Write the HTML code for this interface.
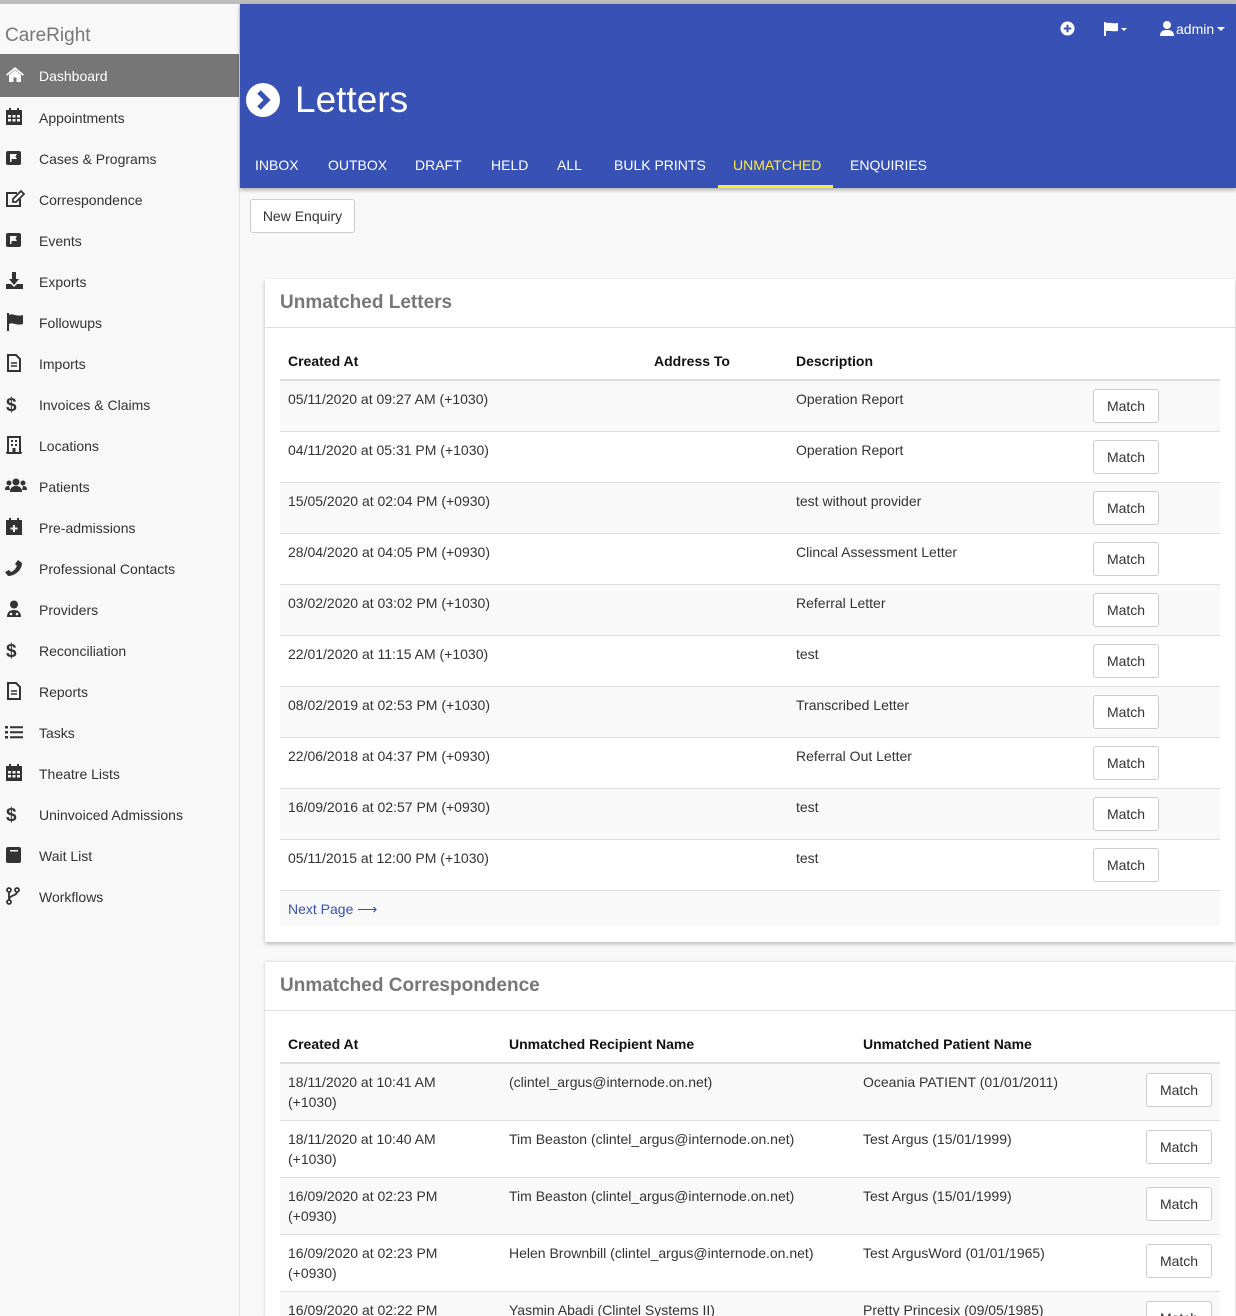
<!DOCTYPE html>
<html style="overflow:hidden;height:1316px"><head><meta charset="utf-8"><style>
*{box-sizing:border-box;margin:0;padding:0}
body{width:1236px;height:1316px;overflow:hidden;background:#f8f8f8;font-family:"Liberation Sans",sans-serif;font-size:14px;color:#333;position:relative}
.a{position:absolute;white-space:nowrap}
#top{position:absolute;left:0;top:0;width:1236px;height:4px;background:#bdbdbd}
#side{position:absolute;left:0;top:4px;width:240px;height:1312px;background:#f8f8f8;border-right:1px solid #e3e3e3}
.brand{position:absolute;left:5px;top:21px;font-size:19px;color:#777}
.nav{position:absolute;left:0;width:239px;height:41px;font-size:14px;color:#333}
.nav .t{position:absolute;left:39px;top:13px}
.nav svg{position:absolute;left:5px;top:11px}
.nav.act{background:#767676;color:#fff;height:43px}
#hdr{position:absolute;left:240px;top:4px;width:996px;height:184px;background:#3751b5;box-shadow:0 2px 4px rgba(0,0,0,.3)}
.tab{position:absolute;top:153px;color:#fff;font-size:14px}
.btn{position:absolute;background:#fff;border:1px solid #ccc;border-radius:3px;font-size:14px;color:#333;text-align:center}
.card{position:absolute;background:#fff;box-shadow:0 2px 4px rgba(0,0,0,.25);overflow:hidden}
.ct{position:absolute;left:15px;font-size:19px;font-weight:bold;color:#777}
.th{position:absolute;font-weight:bold;color:#111}
.row{position:absolute;left:15px;width:940px;border-top:1px solid #ddd}
.row.s{background:#f9f9f9}
.row .c{position:absolute;top:10px}
</style></head><body>
<div id="top"></div>
<div id="side">
<div class="brand">CareRight</div>
<div class="nav act" style="top:50px"><svg width="20" height="18" viewBox="0 0 20 18"><path d="M10 2 1 9.5l1.2 1.2L10 4.5l7.8 6.2L19 9.5z M4 10v7h4.5v-4.5h3V17H16v-7l-6-5z" fill="#fff"/></svg><span class="t" style="top:14px">Dashboard</span></div>
<div class="nav" style="top:93px"><svg width="18" height="18" viewBox="0 0 18 18"><path d="M4 0h2v3H4zM12 0h2v3h-2zM1 2h16v15H1z" fill="#333"/><path d="M3 7h3v2.5H3zM7.5 7h3v2.5h-3zM12 7h3v2.5h-3zM3 11h3v2.5H3zM7.5 11h3v2.5h-3zM12 11h3v2.5h-3z" fill="#f8f8f8"/></svg><span class="t">Appointments</span></div>
<div class="nav" style="top:134px"><svg width="18" height="18" viewBox="0 0 18 18"><rect x="1" y="2" width="15" height="14" rx="2" fill="#333"/><path d="M5 5h7l-1.5 2.5L12 10H6.5v3H5z" fill="#f8f8f8"/></svg><span class="t">Cases &amp; Programs</span></div>
<div class="nav" style="top:175px"><svg width="20" height="18" viewBox="0 0 20 18"><path d="M12 3H2v13h13V9" fill="none" stroke="#333" stroke-width="2"/><path d="M16 1l3 3-8 8H8V9z" fill="none" stroke="#333" stroke-width="1.8"/></svg><span class="t">Correspondence</span></div>
<div class="nav" style="top:216px"><svg width="18" height="18" viewBox="0 0 18 18"><rect x="1" y="2" width="15" height="14" rx="2" fill="#333"/><path d="M5 5h7l-1.5 2.5L12 10H6.5v3H5z" fill="#f8f8f8"/></svg><span class="t">Events</span></div>
<div class="nav" style="top:257px"><svg width="20" height="18" viewBox="0 0 20 18"><path d="M7 0h4v7h3l-5 6-5-6h3zM1 12h5l3 3 3-3h6v5H1z" fill="#333"/></svg><span class="t">Exports</span></div>
<div class="nav" style="top:298px"><svg width="20" height="18" viewBox="0 0 20 18"><path d="M2 0h2v18H2zM4 2c4-2 7 2 14 0v9c-7 2-10-2-14 0z" fill="#333"/></svg><span class="t">Followups</span></div>
<div class="nav" style="top:339px"><svg width="18" height="18" viewBox="0 0 18 18"><path d="M3 1h8l4 4v12H3z" fill="none" stroke="#333" stroke-width="2"/><path d="M6 9h6M6 12h6" stroke="#333" stroke-width="1.5"/></svg><span class="t">Imports</span></div>
<div class="nav" style="top:380px"><svg width="18" height="18" viewBox="0 0 18 18"><text x="1" y="16" font-family="Liberation Sans" font-weight="bold" font-size="19" fill="#333">$</text></svg><span class="t">Invoices &amp; Claims</span></div>
<div class="nav" style="top:421px"><svg width="18" height="18" viewBox="0 0 18 18"><path d="M3 1h12v16H3z" fill="none" stroke="#333" stroke-width="2"/><path d="M6 4h2v2H6zM10 4h2v2h-2zM6 8h2v2H6zM10 8h2v2h-2zM7.5 12h3v5h-3zM1 16h16v1.5H1z" fill="#333"/></svg><span class="t">Locations</span></div>
<div class="nav" style="top:462px"><svg width="22" height="18" viewBox="0 0 22 18"><circle cx="11" cy="5" r="3.5" fill="#333"/><circle cx="4" cy="6" r="2.5" fill="#333"/><circle cx="18" cy="6" r="2.5" fill="#333"/><path d="M5 15c0-4 2-6 6-6s6 2 6 6zM0 13c0-3 1-4 4-4l1 4zM22 13c0-3-1-4-4-4l-1 4z" fill="#333"/></svg><span class="t">Patients</span></div>
<div class="nav" style="top:503px"><svg width="18" height="18" viewBox="0 0 18 18"><path d="M4 0h2v3H4zM12 0h2v3h-2zM1 2h16v15H1z" fill="#333"/><path d="M8 7h2v2.5h2.5v2H10V14H8v-2.5H5.5v-2H8z" fill="#f8f8f8"/></svg><span class="t">Pre-admissions</span></div>
<div class="nav" style="top:544px"><svg width="18" height="18" viewBox="0 0 18 18"><path d="M13 1l4 3c0 7-7 13-14 13L0 13l4-2 2 2c3-1 5-4 6-6l-2-2z" fill="#333"/></svg><span class="t">Professional Contacts</span></div>
<div class="nav" style="top:585px"><svg width="18" height="18" viewBox="0 0 18 18"><circle cx="9" cy="4.5" r="4" fill="#333"/><path d="M2 17c0-5 3-7 7-7s7 2 7 7z" fill="#333"/><circle cx="6" cy="14" r="1.3" fill="#f8f8f8"/><circle cx="12" cy="14" r="1.3" fill="#f8f8f8"/></svg><span class="t">Providers</span></div>
<div class="nav" style="top:626px"><svg width="18" height="18" viewBox="0 0 18 18"><text x="1" y="16" font-family="Liberation Sans" font-weight="bold" font-size="19" fill="#333">$</text></svg><span class="t">Reconciliation</span></div>
<div class="nav" style="top:667px"><svg width="18" height="18" viewBox="0 0 18 18"><path d="M3 1h8l4 4v12H3z" fill="none" stroke="#333" stroke-width="2"/><path d="M6 9h6M6 12h6" stroke="#333" stroke-width="1.5"/></svg><span class="t">Reports</span></div>
<div class="nav" style="top:708px"><svg width="20" height="18" viewBox="0 0 20 18"><path d="M0 3h3v2.5H0zM0 8h3v2.5H0zM0 13h3v2.5H0zM5 3.3h13v2H5zM5 8.3h13v2H5zM5 13.3h13v2H5z" fill="#333"/></svg><span class="t">Tasks</span></div>
<div class="nav" style="top:749px"><svg width="18" height="18" viewBox="0 0 18 18"><path d="M4 0h2v3H4zM12 0h2v3h-2zM1 2h16v15H1z" fill="#333"/><path d="M3 7h3v2.5H3zM7.5 7h3v2.5h-3zM12 7h3v2.5h-3zM3 11h3v2.5H3zM7.5 11h3v2.5h-3zM12 11h3v2.5h-3z" fill="#f8f8f8"/></svg><span class="t">Theatre Lists</span></div>
<div class="nav" style="top:790px"><svg width="18" height="18" viewBox="0 0 18 18"><text x="1" y="16" font-family="Liberation Sans" font-weight="bold" font-size="19" fill="#333">$</text></svg><span class="t">Uninvoiced Admissions</span></div>
<div class="nav" style="top:831px"><svg width="18" height="18" viewBox="0 0 18 18"><rect x="1" y="1" width="15" height="16" rx="2" fill="#333"/><path d="M5 4h8v1.5H5z" fill="#f8f8f8"/></svg><span class="t">Wait List</span></div>
<div class="nav" style="top:872px"><svg width="18" height="18" viewBox="0 0 18 18"><circle cx="4" cy="3" r="2" fill="none" stroke="#333" stroke-width="1.8"/><circle cx="4" cy="15" r="2" fill="none" stroke="#333" stroke-width="1.8"/><circle cx="12" cy="3" r="2" fill="none" stroke="#333" stroke-width="1.8"/><path d="M4 5v8M12 5c0 4-8 3-8 8" fill="none" stroke="#333" stroke-width="1.8"/></svg><span class="t">Workflows</span></div>
</div>

<div id="hdr">
<svg class="a" style="left:5px;top:78px" width="36" height="36" viewBox="0 0 36 36"><circle cx="18" cy="18" r="17" fill="#fff"/><path d="M14 10l8 8-8 8" fill="none" stroke="#3751b5" stroke-width="5"/></svg>
<div class="a" style="left:55px;top:75px;font-size:37px;color:#fff">Letters</div>
<svg class="a" style="left:820px;top:17px" width="15" height="15" viewBox="0 0 16 16"><circle cx="8" cy="8" r="7.5" fill="#fff"/><path d="M4 8h8M8 4v8" stroke="#3751b5" stroke-width="2.2"/></svg>
<svg class="a" style="left:864px;top:18px" width="26" height="14" viewBox="0 0 26 14"><path d="M0 0h2v14H0zM2 1c4-1 6 1 12 0v8c-6 1-8-1-12 0z" fill="#fff"/><path d="M17 6h6l-3 3z" fill="#fff"/></svg>
<svg class="a" style="left:920px;top:17px" width="16" height="15" viewBox="0 0 16 15"><circle cx="7" cy="4" r="4" fill="#fff"/><path d="M0 15c0-5 3-6 7-6s7 1 7 6z" fill="#fff"/></svg>
<div class="a" style="left:936px;top:17px;color:#fff;font-size:14px">admin</div>
<svg class="a" style="left:977px;top:23px" width="9" height="6"><path d="M0 0h8l-4 4z" fill="#fff"/></svg>
<div class="tab" style="left:15px">INBOX</div>
<div class="tab" style="left:88px">OUTBOX</div>
<div class="tab" style="left:175px">DRAFT</div>
<div class="tab" style="left:251px">HELD</div>
<div class="tab" style="left:317px">ALL</div>
<div class="tab" style="left:374px">BULK PRINTS</div>
<div class="tab" style="left:493px;color:#ffeb3b">UNMATCHED</div>
<div class="a" style="left:478px;top:181px;width:115px;height:3px;background:#ffeb3b"></div>
<div class="tab" style="left:610px">ENQUIRIES</div>
</div>

<div class="btn" style="left:250px;top:199px;width:105px;height:34px;line-height:32px">New Enquiry</div>

<div class="card" style="left:265px;top:279px;width:970px;height:663px">
<div class="ct" style="top:13px">Unmatched Letters</div>
<div class="a" style="left:0;top:48px;width:970px;height:1px;background:#ddd"></div>
<div class="th" style="left:23px;top:74px">Created At</div>
<div class="th" style="left:389px;top:74px">Address To</div>
<div class="th" style="left:531px;top:74px">Description</div>
<div class="a" style="left:15px;top:100px;width:940px;height:2px;background:#ddd"></div>
<div class="row s" style="top:102px;height:51px;border-top:0"><span class="c" style="left:8px">05/11/2020 at 09:27 AM (+1030)</span><span class="c" style="left:516px">Operation Report</span><div class="btn" style="left:813px;top:8px;width:66px;height:34px;line-height:32px">Match</div></div>
<div class="row" style="top:152px;height:51px"><span class="c" style="left:8px">04/11/2020 at 05:31 PM (+1030)</span><span class="c" style="left:516px">Operation Report</span><div class="btn" style="left:813px;top:8px;width:66px;height:34px;line-height:32px">Match</div></div>
<div class="row s" style="top:203px;height:51px"><span class="c" style="left:8px">15/05/2020 at 02:04 PM (+0930)</span><span class="c" style="left:516px">test without provider</span><div class="btn" style="left:813px;top:8px;width:66px;height:34px;line-height:32px">Match</div></div>
<div class="row" style="top:254px;height:51px"><span class="c" style="left:8px">28/04/2020 at 04:05 PM (+0930)</span><span class="c" style="left:516px">Clincal Assessment Letter</span><div class="btn" style="left:813px;top:8px;width:66px;height:34px;line-height:32px">Match</div></div>
<div class="row s" style="top:305px;height:51px"><span class="c" style="left:8px">03/02/2020 at 03:02 PM (+1030)</span><span class="c" style="left:516px">Referral Letter</span><div class="btn" style="left:813px;top:8px;width:66px;height:34px;line-height:32px">Match</div></div>
<div class="row" style="top:356px;height:51px"><span class="c" style="left:8px">22/01/2020 at 11:15 AM (+1030)</span><span class="c" style="left:516px">test</span><div class="btn" style="left:813px;top:8px;width:66px;height:34px;line-height:32px">Match</div></div>
<div class="row s" style="top:407px;height:51px"><span class="c" style="left:8px">08/02/2019 at 02:53 PM (+1030)</span><span class="c" style="left:516px">Transcribed Letter</span><div class="btn" style="left:813px;top:8px;width:66px;height:34px;line-height:32px">Match</div></div>
<div class="row" style="top:458px;height:51px"><span class="c" style="left:8px">22/06/2018 at 04:37 PM (+0930)</span><span class="c" style="left:516px">Referral Out Letter</span><div class="btn" style="left:813px;top:8px;width:66px;height:34px;line-height:32px">Match</div></div>
<div class="row s" style="top:509px;height:51px"><span class="c" style="left:8px">16/09/2016 at 02:57 PM (+0930)</span><span class="c" style="left:516px">test</span><div class="btn" style="left:813px;top:8px;width:66px;height:34px;line-height:32px">Match</div></div>
<div class="row" style="top:560px;height:51px"><span class="c" style="left:8px">05/11/2015 at 12:00 PM (+1030)</span><span class="c" style="left:516px">test</span><div class="btn" style="left:813px;top:8px;width:66px;height:34px;line-height:32px">Match</div></div>
<div class="row s" style="top:611px;height:36px"><span class="c" style="left:8px;top:10px;color:#3751b5">Next Page ⟶</span></div>
</div>

<div class="card" style="left:265px;top:962px;width:970px;height:354px;box-shadow:0 0 3px rgba(0,0,0,.2)">
<div class="ct" style="top:13px">Unmatched Correspondence</div>
<div class="a" style="left:0;top:48px;width:970px;height:1px;background:#ddd"></div>
<div class="th" style="left:23px;top:74px">Created At</div>
<div class="th" style="left:244px;top:74px">Unmatched Recipient Name</div>
<div class="th" style="left:598px;top:74px">Unmatched Patient Name</div>
<div class="a" style="left:15px;top:100px;width:940px;height:2px;background:#ddd"></div>
<div class="row s" style="top:102px;height:57px;border-top:0"><span class="c" style="left:8px;line-height:20px;top:8px">18/11/2020 at 10:41 AM<br>(+1030)</span><span class="c" style="left:229px;top:8px;line-height:20px">(clintel_argus@internode.on.net)</span><span class="c" style="left:583px;top:8px;line-height:20px">Oceania PATIENT (01/01/2011)</span><div class="btn" style="left:866px;top:9px;width:66px;height:34px;line-height:32px">Match</div></div>
<div class="row" style="top:158px;height:57px"><span class="c" style="left:8px;line-height:20px;top:8px">18/11/2020 at 10:40 AM<br>(+1030)</span><span class="c" style="left:229px;top:8px;line-height:20px">Tim Beaston (clintel_argus@internode.on.net)</span><span class="c" style="left:583px;top:8px;line-height:20px">Test Argus (15/01/1999)</span><div class="btn" style="left:866px;top:9px;width:66px;height:34px;line-height:32px">Match</div></div>
<div class="row s" style="top:215px;height:57px"><span class="c" style="left:8px;line-height:20px;top:8px">16/09/2020 at 02:23 PM<br>(+0930)</span><span class="c" style="left:229px;top:8px;line-height:20px">Tim Beaston (clintel_argus@internode.on.net)</span><span class="c" style="left:583px;top:8px;line-height:20px">Test Argus (15/01/1999)</span><div class="btn" style="left:866px;top:9px;width:66px;height:34px;line-height:32px">Match</div></div>
<div class="row" style="top:272px;height:57px"><span class="c" style="left:8px;line-height:20px;top:8px">16/09/2020 at 02:23 PM<br>(+0930)</span><span class="c" style="left:229px;top:8px;line-height:20px">Helen Brownbill (clintel_argus@internode.on.net)</span><span class="c" style="left:583px;top:8px;line-height:20px">Test ArgusWord (01/01/1965)</span><div class="btn" style="left:866px;top:9px;width:66px;height:34px;line-height:32px">Match</div></div>
<div class="row s" style="top:329px;height:57px"><span class="c" style="left:8px;line-height:20px;top:8px">16/09/2020 at 02:22 PM<br>(+0930)</span><span class="c" style="left:229px;top:8px;line-height:20px">Yasmin Abadi (Clintel Systems II)</span><span class="c" style="left:583px;top:8px;line-height:20px">Pretty Princesix (09/05/1985)</span><div class="btn" style="left:866px;top:9px;width:66px;height:34px;line-height:32px">Match</div></div>
</div>
</body></html>
